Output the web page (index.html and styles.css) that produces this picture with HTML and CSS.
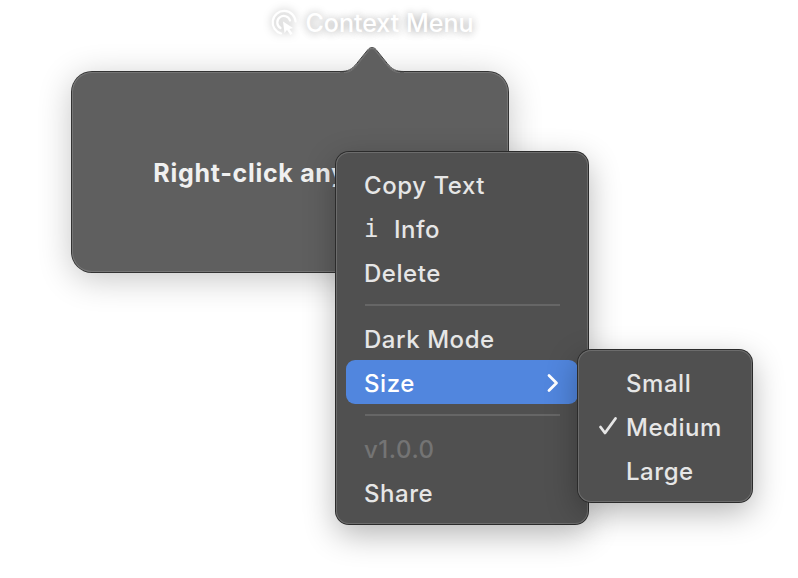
FILE: index.html
```html
<!DOCTYPE html>
<html lang="en">
<head>
    <meta charset="UTF-8">
    <meta name="viewport" content="width=device-width, initial-scale=1.0">
    <title>Context Menu</title>
    <link rel="stylesheet" href="styles.css">
</head>
<body>
    <div class="demo">
        <div class="demo-title">
            <svg class="title-icon" width="28" height="28" viewBox="0 0 28 28" fill="none" stroke="#fff" stroke-width="2.2" stroke-linecap="round">
                <path d="M11 24.5A11.5 11.5 0 1 1 25.6 12.5"/>
                <path d="M10.5 19A6.5 6.5 0 1 1 20 11.5"/>
                <path d="M13 12.5L14.5 24L17 21L20.5 26L22.5 24.5L19.5 20L23 19Z" fill="#fff" stroke="none"/>
            </svg>
            <span>Context Menu</span>
        </div>

        <div class="popover">
            <svg class="popover-tip" width="72" height="28" viewBox="0 0 72 28">
                <path class="tip-fill" d="M4 26C12 26 16 24 20.700 18L32 4C34 1.500 38 1.500 40 4L51.300 18C56 24 60 26 68 26V28H4Z"/>
                <path class="tip-dark" d="M4 25.500C12 25.500 16 23.500 20.700 17.500L32 3.500C34 1 38 1 40 3.500L51.300 17.500C56 23.500 60 25.500 68 25.500"/>
                <path class="tip-light" d="M8 26.500C13 26.500 17 24.500 21.500 18.500L32.800 4.500C34.500 2.300 37.500 2.300 39.200 4.500L50.500 18.500C55 24.500 59 26.500 64 26.500"/>
            </svg>
            <p class="popover-text">Right-click anywhere</p>
        </div>

        <div class="menu main-menu">
            <div class="menu-item">Copy Text</div>
            <div class="menu-item"><span class="info-glyph">i</span>Info</div>
            <div class="menu-item">Delete</div>
            <div class="menu-sep"></div>
            <div class="menu-item">Dark Mode</div>
            <div class="menu-item active">
                Size
                <svg width="14" height="20" viewBox="0 0 14 20" fill="none" stroke="#fff" stroke-width="2.800" stroke-linecap="round" stroke-linejoin="round">
                    <path d="M3 2.500L10.500 10L3 17.500"/>
                </svg>
            </div>
            <div class="menu-sep"></div>
            <div class="menu-item disabled">v1.0.0</div>
            <div class="menu-item">Share</div>
        </div>

        <div class="menu sub-menu">
            <div class="menu-item">Small</div>
            <div class="menu-item">
                <svg class="check" width="20" height="20" viewBox="0 0 20 20" fill="none" stroke="#e6e6e6" stroke-width="2.800" stroke-linecap="round" stroke-linejoin="round">
                    <path d="M2.500 11L7 17L17.500 2.500"/>
                </svg>
                Medium
            </div>
            <div class="menu-item">Large</div>
        </div>
    </div>
</body>
</html>
```

FILE: styles.css
```css
*{
    margin: 0;
    padding: 0;
    box-sizing: border-box;
    font-family: Inter, "Liberation Sans", sans-serif;
}
body{
    background: #fff;
    overflow: hidden;
}
.demo{
    position: relative;
    width: 798px;
    height: 578px;
    padding: 8px 0 0 72px;
}
.demo-title{
    display: flex;
    justify-content: center;
    align-items: center;
    gap: 7px;
    width: 600px;
    height: 30px;
    margin-left: -72px;
    padding-left: 144px;
    color: #fff;
    font-size: 25px;
    font-weight: 500;
    text-shadow: 0 0 8px rgba(0, 0, 0, .28), 0 2px 10px rgba(0, 0, 0, .12);
}
.title-icon{
    filter: drop-shadow(0 0 4px rgba(0, 0, 0, .28));
}
.popover{
    position: relative;
    display: flex;
    justify-content: center;
    align-items: center;
    width: 436px;
    height: 200px;
    margin-top: 34px;
    background: #5f5f5f;
    border-radius: 20px;
    box-shadow: 0 0 0 1px #333, inset 0 0 0 1px #757575, 0 6px 34px rgba(0, 0, 0, .24);
}
.popover-tip{
    position: absolute;
    top: -26px;
    left: 264px;
}
.tip-fill{
    fill: #5f5f5f;
}
.tip-dark{
    fill: none;
    stroke: #3c3c3c;
    stroke-width: 1;
}
.tip-light{
    fill: none;
    stroke: #757575;
    stroke-width: 1;
}
.popover-text{
    padding-top: 2px;
    color: #f0f0f0;
    font-size: 25px;
    font-weight: 700;
    letter-spacing: .7px;
    white-space: nowrap;
}
.menu{
    position: absolute;
    background: #505050;
    border-radius: 13px;
    box-shadow: 0 0 0 1px #2b2b2b, inset 0 0 0 1px #6c6c6c, 0 10px 32px rgba(0, 0, 0, .3);
    color: #e6e6e6;
    font-size: 24px;
    font-weight: 500;
    letter-spacing: .55px;
}
.main-menu{
    top: 152px;
    left: 336px;
    width: 252px;
    height: 372px;
    padding: 10px;
}
.sub-menu{
    top: 350px;
    left: 578px;
    width: 174px;
    height: 152px;
    padding: 10px 0 0 48px;
}
.menu-item{
    display: flex;
    align-items: center;
    height: 44px;
    padding-top: 2px;
    padding-left: 18px;
    border-radius: 9px;
    white-space: nowrap;
}
.sub-menu .menu-item{
    position: relative;
    padding-left: 0;
}
.menu-item.active{
    justify-content: space-between;
    width: 232px;
    padding-right: 18px;
    background: #5186de;
    color: #fff;
}
.menu-item.disabled{
    color: #747474;
}
.info-glyph{
    width: 30px;
    font-family: "DejaVu Sans Mono", monospace;
    font-size: 24px;
    font-weight: 400;
    letter-spacing: 0;
}
.check{
    position: absolute;
    left: -28px;
    top: 12px;
}
.menu-sep{
    height: 2px;
    margin: 10px 18px 10px 19px;
    background: #666;
}
```
